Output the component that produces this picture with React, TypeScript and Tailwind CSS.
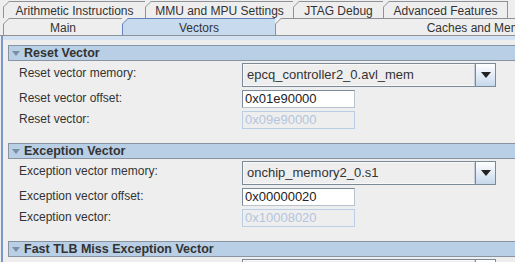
import React from 'react'

type TabProps = { label: string; width: number; selected?: boolean }

function Tab({ label, width, selected }: TabProps) {
  return (
    <div
      className={`relative -ml-px h-full shrink-0 flex items-center justify-center border-t border-l border-r ${
        selected ? 'bg-[#c8daee] border-[#6382bf] border-b-0' : 'bg-[#eeeeee] border-[#8e9196]'
      }`}
      style={{ width }}
    >
      {/* cut corner */}
      <svg className="absolute -top-px -left-px" width="7" height="7" viewBox="0 0 7 7">
        <polygon points="0,0 6.5,0 0,6.5" fill="#eeeeee" />
        <line x1="0" y1="6.5" x2="6.5" y2="0" stroke={selected ? '#6382bf' : '#8e9196'} strokeWidth="1" />
      </svg>
      <span className="whitespace-nowrap leading-none pt-px">{label}</span>
    </div>
  )
}

function Combo({ value }: { value: string }) {
  return (
    <div className="flex h-[24px] w-[254px] border border-[#7a8a99]">
      <div className="flex-1 flex items-center pl-[3px] bg-[#eeeeee] border border-[#f8f8f8] border-r-[#c4ccd6] text-[13px]">
        {value}
      </div>
      <div className="w-[20px] flex items-center justify-center border-l border-[#7a8a99] bg-gradient-to-b from-[#ffffff] to-[#c6d8ec]">
        <svg width="10" height="6" viewBox="0 0 10 6">
          <polygon points="0,0 10,0 5,6" fill="#222" />
        </svg>
      </div>
    </div>
  )
}

function TextField({ value, disabled }: { value: string; disabled?: boolean }) {
  return (
    <div
      className={`h-[18px] w-[113px] flex items-center pl-[2px] text-[13px] border ${
        disabled
          ? 'border-[#b8cfe5] bg-[#eeeeee] text-[#b3c5dc]'
          : 'border-[#7a8a99] border-r-[#b8c2cc] border-b-[#b8c2cc] bg-white text-[#222]'
      }`}
    >
      {value}
    </div>
  )
}

function Header({ title }: { title: string }) {
  return (
    <div className="h-[16px] flex items-center bg-[#b8cfe5] border border-[#8894a2] border-r-0">
      <svg className="ml-[3px] mr-[4px]" width="8" height="5" viewBox="0 0 8 5">
        <polygon points="0,0 8,0 4,5" fill="#7d8ea3" />
      </svg>
      <span className="font-bold text-[12.5px] leading-none">{title}</span>
    </div>
  )
}

function Section({ title, memLabel, mem, offLabel, off, vecLabel, vec }: {
  title: string; memLabel: string; mem: string; offLabel: string; off: string; vecLabel: string; vec: string
}) {
  return (
    <div className="mb-[14px]">
      <Header title={title} />
      <div className="pl-[11px] pt-[2px] flex flex-col gap-[3px]">
        <div className="flex items-center h-[24px]">
          <span className="w-[223px] -mt-[5px]">{memLabel}</span>
          <Combo value={mem} />
        </div>
        <div className="flex items-center h-[18px]">
          <span className="w-[223px] -mt-[2px]">{offLabel}</span>
          <TextField value={off} />
        </div>
        <div className="flex items-center h-[18px]">
          <span className="w-[223px] -mt-[2px]">{vecLabel}</span>
          <TextField value={vec} disabled />
        </div>
      </div>
    </div>
  )
}

export default function App() {
  return (
    <div className="w-[515px] h-[262px] overflow-hidden bg-[#eeeeee] text-[12px] text-[#333333] font-['Liberation_Sans',Arial,sans-serif]">
      {/* tab rows */}
      <div className="flex h-[18px] pl-[4px] pt-px">
        <Tab label="Arithmetic Instructions" width={143} />
        <Tab label="MMU and MPU Settings" width={149} />
        <Tab label="JTAG Debug" width={91} />
        <Tab label="Advanced Features" width={125} />
      </div>
      <div className="flex h-[18px] pl-[4px] border-b border-[#8e9196]">
        <Tab label="Main" width={120} />
        <Tab label="Vectors" width={154} selected />
        <Tab label="Caches and Memory Interfaces" width={470} />
      </div>

      {/* content */}
      <div className="ml-px border-l-2 border-[#7b97c9]">
        <div className="h-[4px] bg-[#d3e2f3]" />
        <div className="pl-[5px] pt-[5px]">
          <Section
            title="Reset Vector"
            memLabel="Reset vector memory:"
            mem="epcq_controller2_0.avl_mem"
            offLabel="Reset vector offset:"
            off="0x01e90000"
            vecLabel="Reset vector:"
            vec="0x09e90000"
          />
          <Section
            title="Exception Vector"
            memLabel="Exception vector memory:"
            mem="onchip_memory2_0.s1"
            offLabel="Exception vector offset:"
            off="0x00000020"
            vecLabel="Exception vector:"
            vec="0x10008020"
          />
          <Section
            title="Fast TLB Miss Exception Vector"
            memLabel="Fast TLB Miss Exception vector memory:"
            mem=""
            offLabel="Fast TLB Miss Exception vector offset:"
            off="0x00000000"
            vecLabel="Fast TLB Miss Exception vector:"
            vec="0x00000000"
          />
        </div>
      </div>
    </div>
  )
}
